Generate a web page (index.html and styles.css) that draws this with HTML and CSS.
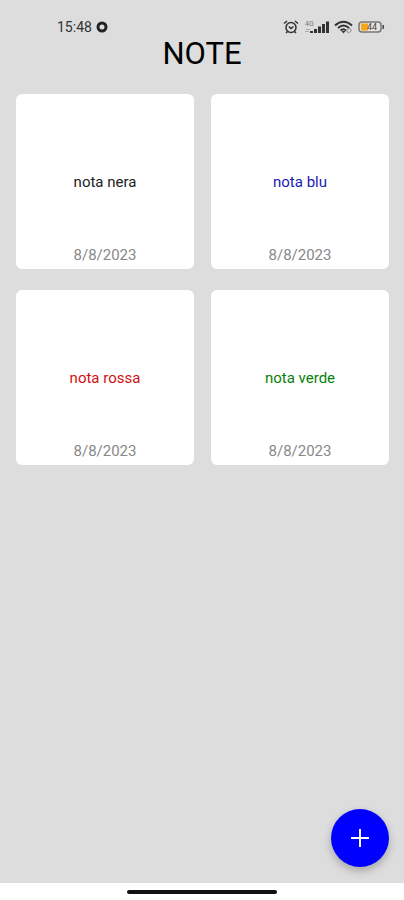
FILE: index.html
```html
<!DOCTYPE html>
<html lang="it">
<head>
    <meta charset="UTF-8">
    <meta name="viewport" content="width=device-width, initial-scale=1.0">
    <title>Note</title>
    <link rel="stylesheet" href="styles.css">
</head>
<body>

    <div class="screen">
        <div class="status-bar">
            <div class="status-left">
                <span>15:48</span>
                <svg width="12" height="12" viewBox="0 0 12 12">
                    <circle cx="6" cy="6" r="4" fill="#ddd" stroke="#222" stroke-width="3"/>
                </svg>
            </div>
            <div class="status-right">
                <!-- Alarm -->
                <svg width="16" height="16" viewBox="0 0 16 16" fill="none" stroke="#333" stroke-width="1.5">
                    <circle cx="8" cy="8.5" r="5"/>
                    <path d="M1 4.5L4 2M15 4.5L12 2M4.5 12.5L3 14M11.5 12.5L13 14M5.8 7.5L8 9.5L10.5 7.5"/>
                </svg>
                <!-- Mobile signal -->
                <svg width="25" height="16" viewBox="0 0 25 16">
                    <text class="network" x="1" y="7">4G</text>
                    <path d="M1 12.5h4M2 10.5h4" stroke="#aaa" fill="none"/>
                    <path d="M6 12h3v2H6zM10 10h3v4h-3zM14 7.5h3V14h-3zM18 5h3v9h-3zM22 2.500h3V14h-3z" fill="#333"/>
                </svg>
                <!-- Wi-Fi -->
                <svg width="19" height="16" viewBox="0 0 19 16" fill="none" stroke="#333" stroke-width="2">
                    <path d="M1 6.5Q9.5 -1 18 6.5M4 9Q9.5 4 15 9M6.5 11.5Q9.5 9 12 11.5"/>
                    <path d="M7.5 12h4L9.5 14.5z" fill="#333" stroke="none"/>
                    <path d="M12.5 12l3-3 2 2.5-3 2.5z" fill="#ddd" stroke="#888" stroke-width="1"/>
                </svg>
                <!-- Battery -->
                <svg width="27" height="16" viewBox="0 0 27 16">
                    <rect x="1" y="3" width="22" height="10" rx="3" fill="#e8e4dc" stroke="#777" stroke-width="1.5"/>
                    <path d="M4 4.5H10V11.500H4Q3 11.500 3 10.500V5.500Q3 4.500 4 4.500z" fill="#f5a81c"/>
                    <path d="M25 6q1.500 2 0 4z" fill="#444" stroke="#444"/>
                    <text class="charge" x="9" y="11">44</text>
                </svg>
            </div>
        </div>

        <h1 class="title">NOTE</h1>

        <main class="notes">
            <article class="note">
                <p class="note-text black">nota nera</p>
                <time class="note-date" datetime="2023-08-08">8/8/2023</time>
            </article>
            <article class="note">
                <p class="note-text blue">nota blu</p>
                <time class="note-date" datetime="2023-08-08">8/8/2023</time>
            </article>
            <article class="note">
                <p class="note-text red">nota rossa</p>
                <time class="note-date" datetime="2023-08-08">8/8/2023</time>
            </article>
            <article class="note">
                <p class="note-text green">nota verde</p>
                <time class="note-date" datetime="2023-08-08">8/8/2023</time>
            </article>
        </main>

        <button class="add-button" type="button" aria-label="Aggiungi nota">
            <svg width="20" height="20" viewBox="0 0 20 20" stroke="#fff" stroke-width="2">
                <path d="M10 1v18M1 10h18"/>
            </svg>
        </button>
    </div>

    <div class="nav-bar">
        <div class="nav-handle"></div>
    </div>

</body>
</html>
```

FILE: styles.css
```css
* {
    box-sizing: border-box;
}

body {
    margin: 0;
    min-height: 100vh;
    display: flex;
    flex-direction: column;
    background-color: white;
    font-family: Roboto, "Liberation Sans", sans-serif;
}

.screen {
    position: relative;
    flex: 1;
    background-color: #ddd;
}

/* Status bar */
.status-bar {
    display: flex;
    justify-content: space-between;
    align-items: center;
    padding: 19px 19px 0 57px;
    height: 35px;
    font-size: 14px;
    line-height: 16px;
    color: #333;
}

.status-left,
.status-right {
    display: flex;
    align-items: center;
    gap: 4px;
}

.status-right {
    gap: 5px;
}

.network {
    font-size: 7px;
    fill: #777;
}

.charge {
    font-size: 9px;
    fill: #444;
}

.title {
    margin: 0;
    font-size: 31px;
    font-weight: 400;
    line-height: 37px;
    text-align: center;
    color: black;
}

/* Notes */
.notes {
    display: grid;
    grid-template-columns: repeat(2, 1fr);
    gap: 21px 17px;
    padding: 22px 15px 22px 16px;
}

.note {
    display: flex;
    flex-direction: column;
    align-items: center;
    height: 175px;
    padding: 24px 8px 4px;
    border-radius: 6px;
    background-color: white;
    font-size: 15px;
    line-height: 20px;
}

.note-text {
    display: flex;
    align-items: center;
    flex: 1;
    margin: 0;
}

.note-date {
    color: #888;
}

.black {
    color: #222;
}

.blue {
    color: #1a1ab5;
}

.red {
    color: #d01010;
}

.green {
    color: #087f08;
}

.add-button {
    position: absolute;
    right: 15px;
    bottom: 16px;
    display: flex;
    align-items: center;
    justify-content: center;
    width: 58px;
    height: 58px;
    padding: 0;
    border: none;
    border-radius: 50%;
    background-color: blue;
    box-shadow: 0 4px 8px rgba(0, 0, 0, 0.25);
    cursor: pointer;
}

/* Bottom navigation */
.nav-bar {
    display: flex;
    justify-content: center;
    height: 17px;
    padding-top: 7px;
}

.nav-handle {
    width: 37%;
    height: 4px;
    border-radius: 2px;
    background-color: #111;
}
```
